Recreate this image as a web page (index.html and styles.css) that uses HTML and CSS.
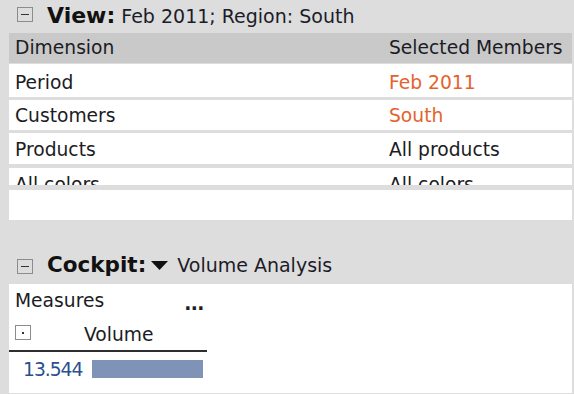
FILE: index.html
```html
<!DOCTYPE html>
<html>
<head>
<meta charset="utf-8">
<link rel="stylesheet" href="styles.css">
</head>
<body>
<div class="page">
  <div class="title view-title">
    <span class="minus"></span>
    <span class="text"><span class="label">View:</span> Feb 2011; Region: South</span>
  </div>
  <div class="table">
    <div class="row head"><div class="c1">Dimension</div><div class="c2">Selected Members</div></div>
    <div class="row r1"><div class="c1">Period</div><div class="c2 sel">Feb 2011</div></div>
    <div class="row r2"><div class="c1">Customers</div><div class="c2 sel">South</div></div>
    <div class="row r3"><div class="c1">Products</div><div class="c2">All products</div></div>
    <div class="row r4"><div class="c1">All colors</div><div class="c2">All colors</div></div>
  </div>
  <div class="blank"></div>
  <div class="title cockpit-title">
    <span class="minus"></span>
    <span class="text"><span class="label">Cockpit:</span><svg class="tri" width="17" height="9" viewBox="0 0 17 9"><polygon points="0,0 17,0 8.5,9" fill="#111"/></svg>Volume Analysis</span>
  </div>
  <div class="cockpit">
    <div class="measures"><span>Measures</span><span class="dots">...</span></div>
    <div class="vol-head">
      <span class="dotbox"><span class="dot"></span></span>
      <span class="vol-label">Volume</span>
    </div>
    <div class="vol-row">
      <span class="num">13.544</span>
      <span class="bar" style="width:111px"></span>
    </div>
  </div>
</div>
</body>
</html>
```

FILE: styles.css
```css
html, body {
  margin: 0;
  padding: 0;
  background: #dddddd;
}
body {
  font-family: "DejaVu Sans", Verdana, sans-serif;
  font-size: 18.7px;
  color: #1c1c24;
  width: 574px;
  height: 394px;
  overflow: hidden;
}
.page {
  padding-left: 9px;
  padding-right: 2px;
}
.title {
  display: flex;
  align-items: flex-start;
  line-height: 30px;
  font-size: 19px;
  color: #1c1c28;
}
.view-title {
  height: 33px;
}
.title .text {
  padding-top: 1px;
  white-space: nowrap;
}
.label {
  font-weight: bold;
  font-size: 22px;
  line-height: 20px;
  color: #111;
}
.cockpit-title .label {
  font-size: 21.5px;
}
.minus {
  box-sizing: border-box;
  width: 16px;
  height: 15px;
  border: 1px solid #8c8c8c;
  margin: 7px 14px 0 8px;
  position: relative;
  flex: none;
}
.minus::after {
  content: "";
  position: absolute;
  left: 3px;
  right: 3px;
  top: 6px;
  height: 1px;
  background: #333;
}
.table {
  height: 152px;
  overflow: hidden;
  display: flex;
  flex-direction: column;
}
.row {
  display: grid;
  grid-template-columns: 374px 1fr;
  background: #fff;
  line-height: 30px;
  box-sizing: border-box;
  flex: none;
  white-space: nowrap;
}
.row > div {
  padding-left: 6px;
}
.head {
  background: #c9c9c9;
  height: 30px;
}
.r1 { margin-top: 1px; height: 33px; padding-top: 4px; }
.r2 { margin-top: 3px; height: 30px; padding-top: 1px; }
.r3 { margin-top: 3px; height: 31px; padding-top: 2px; }
.r4 { margin-top: 4px; height: 30px; padding-top: 2px; }
.sel {
  color: #e4632c;
}
.blank {
  margin-top: 5px;
  height: 30px;
  background: #fff;
}
.cockpit-title {
  margin-top: 30px;
  height: 34px;
}
.cockpit-title .minus {
  margin-top: 9px;
}
.cockpit-title .text {
  padding-top: 0;
}
.tri {
  margin: 0 9px 0 5px;
  vertical-align: 2px;
}
.cockpit {
  background: #fff;
  height: 109px;
  padding-top: 2px;
  box-sizing: border-box;
}
.measures {
  display: flex;
  line-height: 30px;
  padding-left: 6px;
  height: 32px;
}
.dots {
  font-weight: bold;
  margin-left: 80px;
  position: relative;
  top: 3px;
  letter-spacing: -0.5px;
}
.vol-head {
  width: 198px;
  height: 32px;
  border-bottom: 2px solid #2e2e2e;
  display: flex;
  align-items: flex-start;
  line-height: 30px;
}
.dotbox {
  box-sizing: border-box;
  width: 16px;
  height: 15px;
  border: 1px solid #8c8c8c;
  margin: 7px 0 0 6px;
  position: relative;
  flex: none;
}
.dot {
  position: absolute;
  left: 6px;
  top: 6px;
  width: 2px;
  height: 2px;
  background: #333;
}
.vol-label {
  margin-left: 53px;
  padding-top: 2px;
}
.vol-row {
  display: flex;
  align-items: flex-start;
}
.num {
  color: #2b4f8f;
  line-height: 30px;
  padding-top: 3px;
  margin-left: 14px;
  letter-spacing: -1px;
}
.bar {
  display: block;
  height: 18px;
  margin-top: 8px;
  margin-left: 10px;
  background: #7f93b7;
}
```
